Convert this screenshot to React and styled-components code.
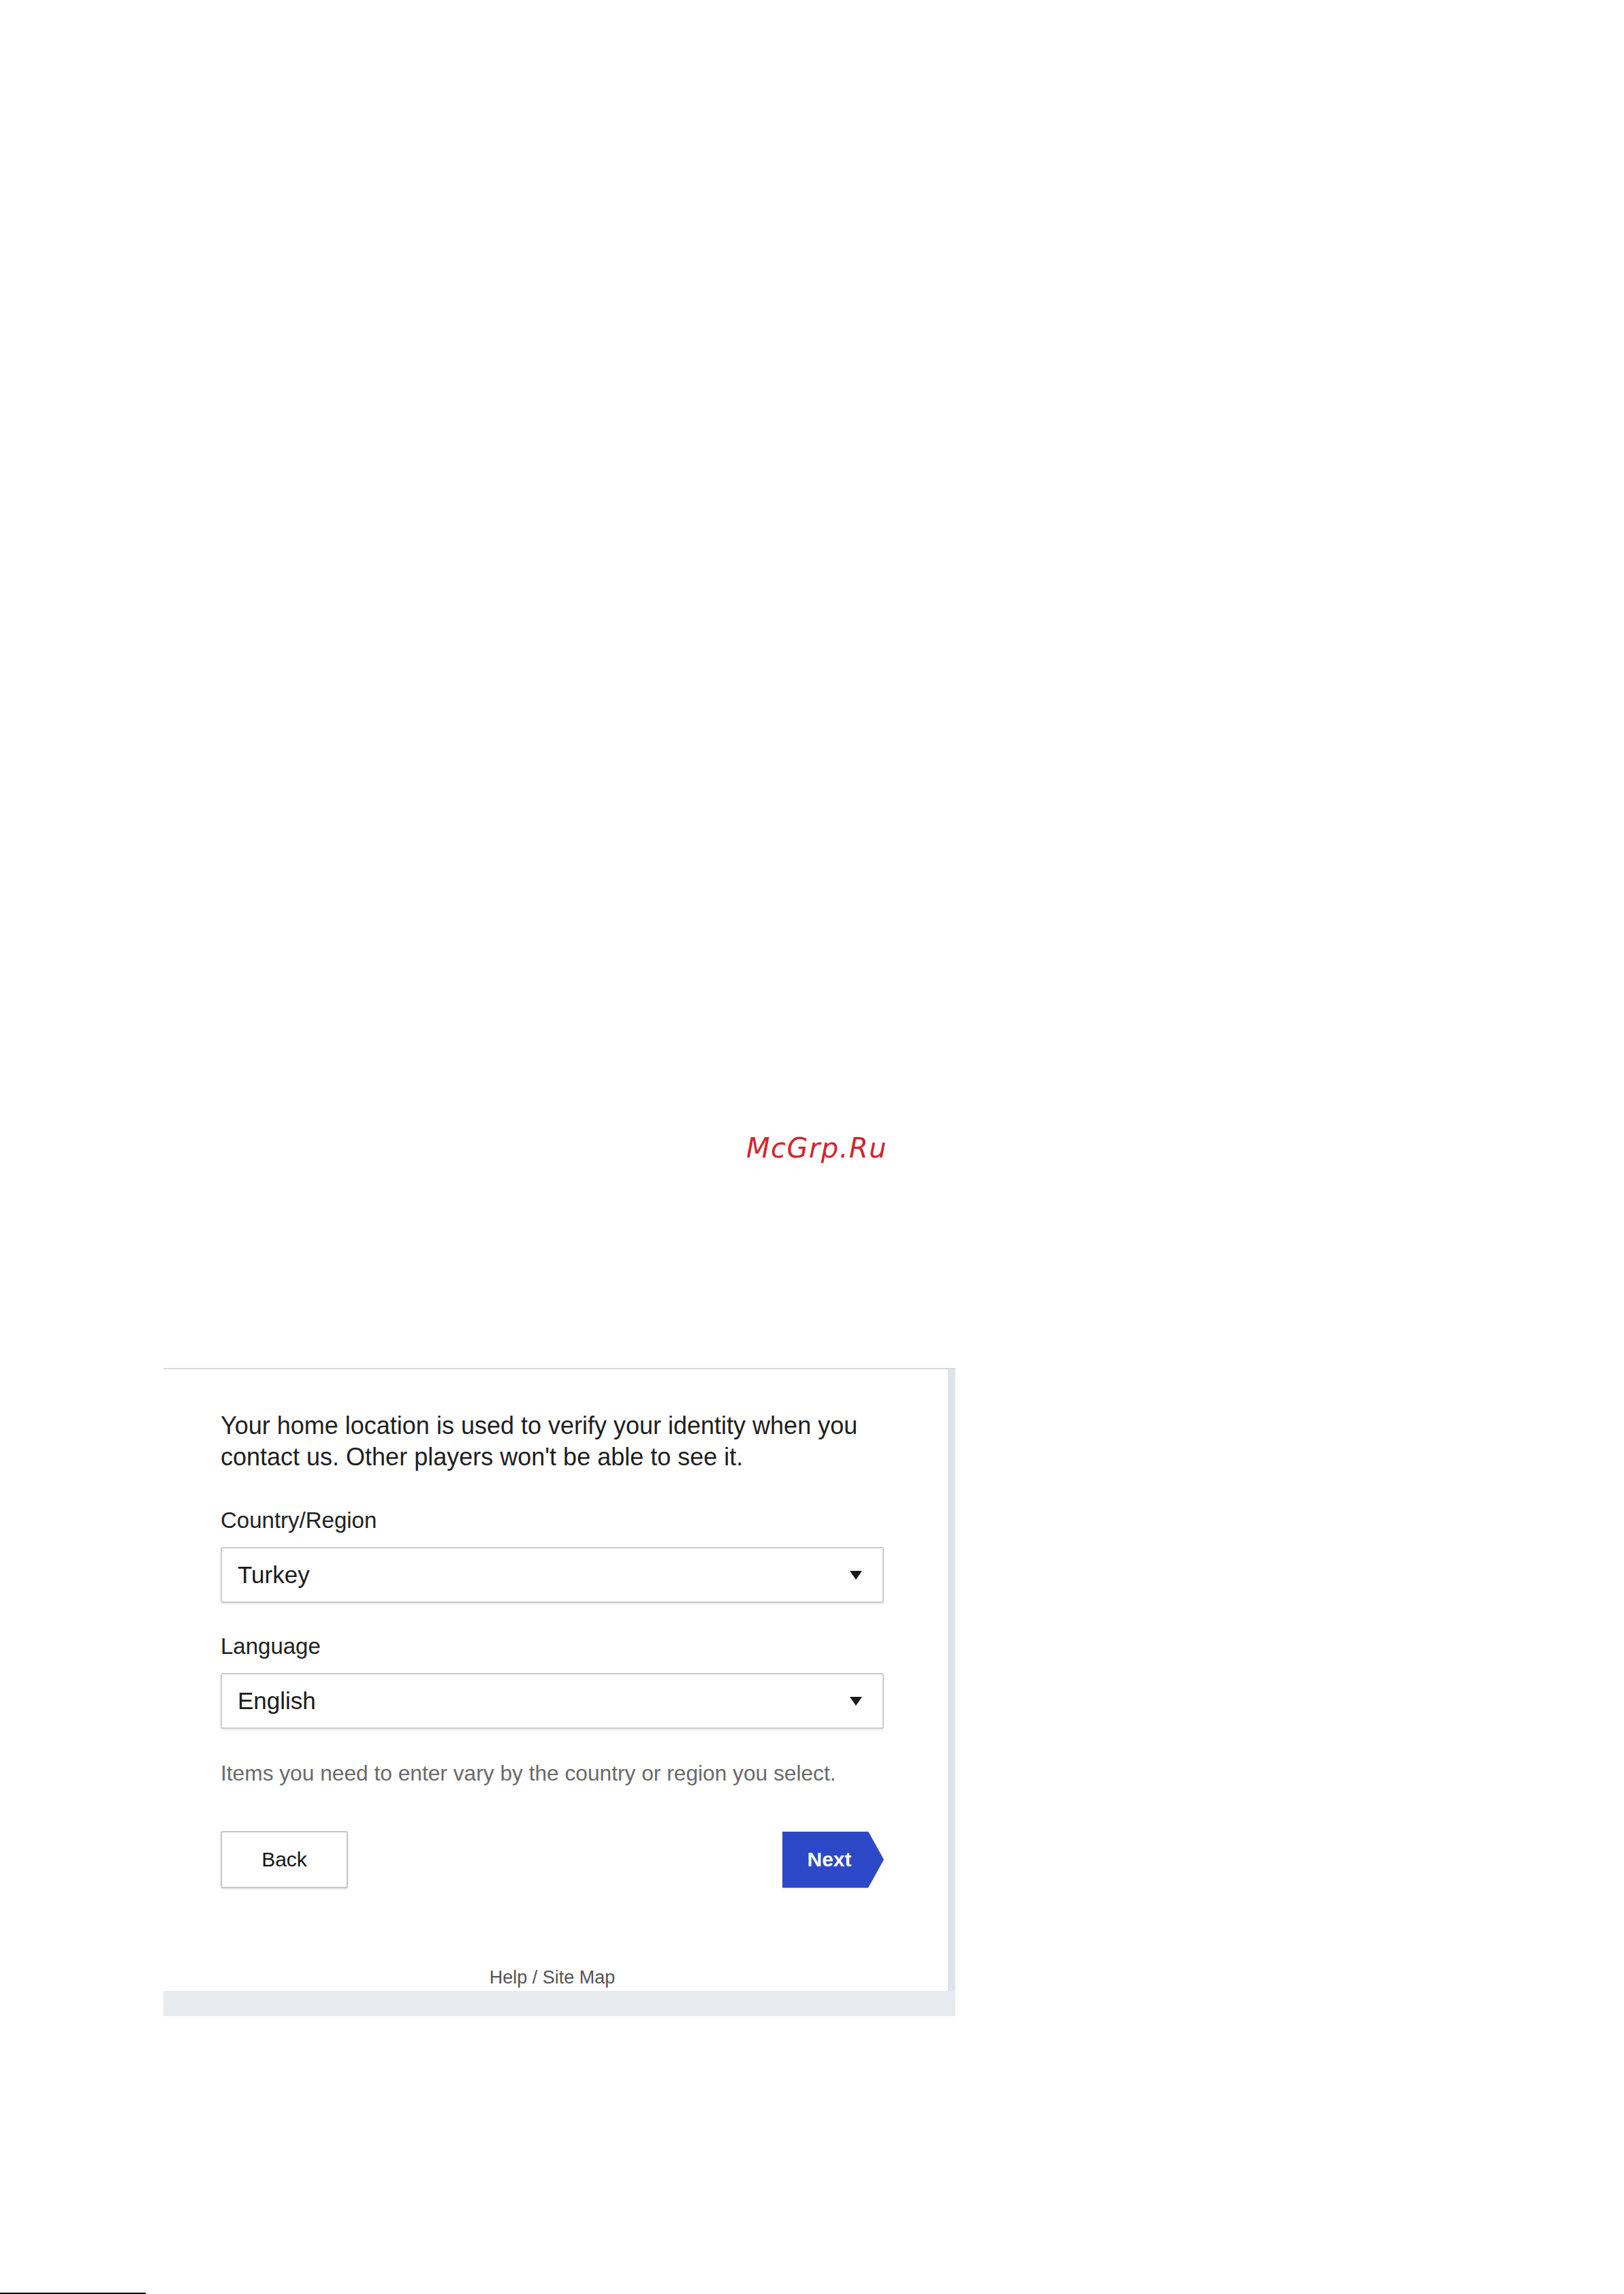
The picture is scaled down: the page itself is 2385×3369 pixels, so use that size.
import React from "react";
import styled, { createGlobalStyle } from "styled-components";

const Global = createGlobalStyle`
  html, body { margin: 0; padding: 0; background: #ffffff; }
  body { font-family: "Liberation Sans", Arial, sans-serif; }
`;

const Page = styled.div`
  width: 2385px;
  min-height: 3369px;
  display: flex;
  flex-direction: column;
  padding-top: 1662px;
  box-sizing: border-box;
`;

const Watermark = styled.div`
  align-self: center;
  margin-left: 14px;
  font-family: "DejaVu Sans", sans-serif;
  font-style: oblique;
  font-size: 40px;
  line-height: 48px;
  letter-spacing: 1.5px;
  color: #d4242b;
`;

const Panel = styled.section`
  margin-top: 299px;
  margin-left: 240px;
  width: 1163px;
  display: flex;
  flex-direction: column;
  border-top: 2px solid #d9d9d9;
  background: #dfe4ea;
`;

const PanelBody = styled.div`
  display: flex;
  flex-direction: column;
  background: #ffffff;
  margin-right: 11px;
  padding: 60px 94px 4px 84px;
`;

const Intro = styled.p`
  margin: 0 0 50px;
  font-size: 36px;
  line-height: 46px;
  color: #1f1f1f;
`;

const Label = styled.div`
  font-size: 33px;
  line-height: 40px;
  color: #222;
  margin-bottom: 19px;
`;

const SelectBox = styled.div`
  height: 82px;
  box-sizing: border-box;
  border: 2px solid #cbcbcb;
  border-radius: 3px;
  box-shadow: 0 2px 2px rgba(0, 0, 0, 0.08);
  display: flex;
  align-items: center;
  justify-content: space-between;
  padding: 0 30px 0 23px;
  font-size: 35px;
  color: #1a1a1a;
  margin-bottom: ${(p) => p.$gap || 0}px;
`;

const Caret = () => (
  <svg width="18" height="13" viewBox="0 0 18 13">
    <polygon points="0,0 18,0 9,13" fill="#1a1a1a" />
  </svg>
);

const Hint = styled.p`
  margin: 45px 0 65px;
  font-size: 31.7px;
  line-height: 40px;
  color: #6a6a6a;
`;

const Actions = styled.div`
  display: flex;
  justify-content: space-between;
  align-items: center;
`;

const BackButton = styled.button`
  width: 187px;
  height: 84px;
  box-sizing: border-box;
  background: #fff;
  border: 2px solid #c6c6c6;
  border-radius: 3px;
  box-shadow: 0 2px 2px rgba(0, 0, 0, 0.1);
  font-family: "Liberation Sans", Arial, sans-serif;
  font-size: 30px;
  color: #141414;
  padding: 0;
`;

const NextButton = styled.button`
  width: 149px;
  height: 83px;
  border: none;
  background: #2c48c7;
  clip-path: polygon(0 0, 126px 0, 100% 50%, 126px 100%, 0 100%);
  font-family: "Liberation Sans", Arial, sans-serif;
  font-weight: bold;
  font-size: 30px;
  color: #fff;
  padding: 0 11px 0 0;
`;

const FooterLinks = styled.div`
  margin-top: 115px;
  text-align: center;
  font-size: 27px;
  line-height: 32px;
  color: #555;
`;

const BottomBand = styled.div`
  height: 37px;
  background: #e7eaee;
`;

const PageRule = styled.div`
  margin-top: auto;
  width: 214px;
  height: 2px;
  background: #000;
`;

export default function App() {
  return (
    <>
      <Global />
      <Page>
        <Watermark>McGrp.Ru</Watermark>
        <Panel>
          <PanelBody>
            <Intro>
              Your home location is used to verify your identity when you
              <br />
              contact us. Other players won't be able to see it.
            </Intro>
            <Label>Country/Region</Label>
            <SelectBox $gap={44}>
              <span>Turkey</span>
              <Caret />
            </SelectBox>
            <Label>Language</Label>
            <SelectBox>
              <span>English</span>
              <Caret />
            </SelectBox>
            <Hint>Items you need to enter vary by the country or region you select.</Hint>
            <Actions>
              <BackButton>Back</BackButton>
              <NextButton>Next</NextButton>
            </Actions>
            <FooterLinks>Help / Site Map</FooterLinks>
          </PanelBody>
          <BottomBand />
        </Panel>
        <PageRule />
      </Page>
    </>
  );
}
